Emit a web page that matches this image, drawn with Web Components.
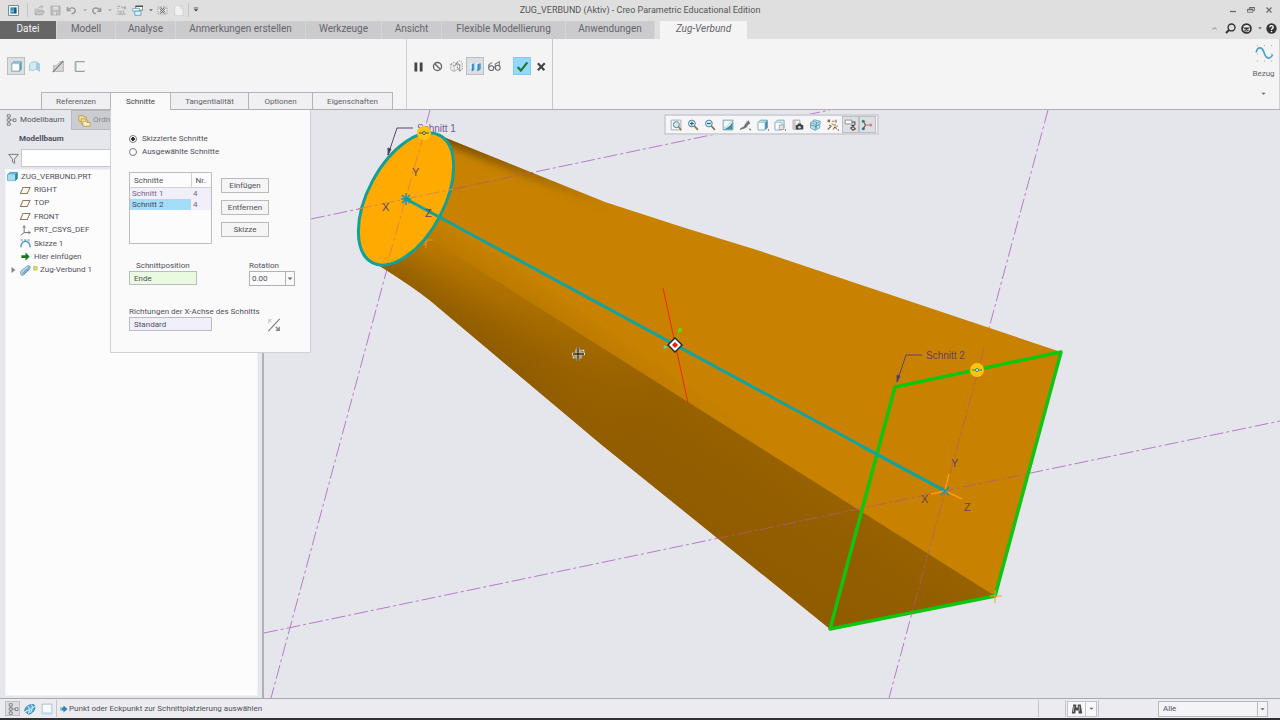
<!DOCTYPE html>
<html lang="de">
<head>
<meta charset="utf-8">
<title>ZUG_VERBUND (Aktiv) - Creo Parametric Educational Edition</title>
<style>
  html, body { margin: 0; height: 100%; }
  body {
    font-family: Roboto, "Open Sans", sans-serif;
    font-size: 8px;
    line-height: 12px;
    color: #50505a;
    --line: #b4b4b8;
    --paper: #f4f4f4;
    --canvas: #e5e6ec;
  }
</style>
</head>
<body>
<cad-app></cad-app>

<script>
const BASE = `*{box-sizing:border-box} button,input,select{font:inherit;color:inherit;margin:0;border-radius:0}`;

function component(name, css, html, setup) {
  const template = document.createElement('template');
  template.innerHTML = `<style>${BASE}${css}</style>${html}`;
  customElements.define(name, class extends HTMLElement {
    constructor() {
      super();
      this.attachShadow({ mode: 'open' }).append(template.content.cloneNode(true));
    }
    connectedCallback() { if (setup) setup(this, this.shadowRoot); }
  });
}

/* ---- Icons, each on a 16 x 16 grid ---- */
const ICONS = {
  app: `<rect x="1" y="1" width="14" height="14" fill="#f6fafc" stroke="#555"/><rect x="3.500" y="3.500" width="9" height="9" fill="#2a8fc0"/><path d="M4 9h5V4" fill="none" stroke="#cfe8f4"/><rect x="9" y="4" width="3" height="8" fill="#24506e"/>`,
  open: `<path d="M1.500 14V6h4l1 1.500h6V14z" fill="#d2d2d2" stroke="#a8a8a8"/><path d="M7 5c1-3 3-3 5-3M10 1l3 1-2 3M2 14l2.500-5H15l-2.500 5z" fill="#c8c8c8" stroke="#a4a4a4"/>`,
  save: `<path d="M1.500 1.500h13v13h-13z" fill="#bcbcbc" stroke="#a0a0a0"/><path d="M4 2h8v5H4zM5 10h7v4H5z" fill="#dedede"/><path d="M9 11h2v3H9z" fill="#a0a0a0"/>`,
  undo: `<path d="M2 3v5h5M2.500 7.500C5 3 14 3 13.500 8.500 13 12 10 12.500 8 12.500" fill="none" stroke="#999" stroke-width="2"/>`,
  redo: `<path d="M14 4v5H9M13.500 8.500C11 3 2 3 2.500 8.500 3 12 6 12.500 7 12.500" fill="none" stroke="#999" stroke-width="2"/>`,
  regen: `<path d="M2 2h4M2 5h2M2 9h3M1 13h13M8 2l2 3M13 1v6M10 4h5M7 8v5M11 8v4" stroke="#aaa" stroke-width="1.600" fill="none"/><path d="M5 10h6v4H5z" fill="none" stroke="#bbb"/>`,
  windows: `<path d="M5.500 1.500h10v6h-10z" fill="#fff" stroke="#555"/><path d="M5 1h11v2H5z" fill="#555"/><path d="M1 5h10v4H1z" fill="#e8f5fa" stroke="#4ba2c0"/><path d="M4 9h9v6H4z" fill="#dff2f8" stroke="#3a8fb0"/>`,
  closewin: `<path d="M1.500 3h13v10h-13z" fill="#ededed" stroke="#777" stroke-dasharray="2 1.500"/><path d="M4.500 4.500l7 7M11.500 4.500l-7 7" stroke="#666" stroke-width="3"/><path d="M4.500 4.500l7 7M11.500 4.500l-7 7" stroke="#f4f4f4" stroke-width="1.200"/>`,
  blank: `<path d="M2.500 .500h8l4 4v11h-12z" fill="#f1f1f1" stroke="#cacaca"/><path d="M10.500 .500v4h4" fill="none" stroke="#cacaca"/>`,
  caret: `<path d="M3 6h10l-5 5z" fill="#666"/>`,
  caretlight: `<path d="M3 6h10l-5 5z" fill="#a6a6a6"/>`,
  morecaret: `<path d="M2 2.500h12" stroke="#444" stroke-width="2"/><path d="M2 6h12l-6 6z" fill="#444"/>`,
  minimize: `<path d="M2 11h12" stroke="#666" stroke-width="2.500"/>`,
  restore: `<path d="M5 6V3h10v6h-3M1 6.500h11v6H1z" fill="none" stroke="#666" stroke-width="1.600"/><path d="M1 7h11M5 3h10" stroke="#666" stroke-width="2.500"/>`,
  close: `<path d="M3 3l10 10M13 3L3 13" stroke="#666" stroke-width="2.200"/>`,
  chevup: `<path d="M3 10l5-4 5 4" fill="none" stroke="#999" stroke-width="2.500"/>`,
  search: `<circle cx="9.500" cy="6.500" r="5" fill="none" stroke="#333" stroke-width="2"/><path d="M6 10l-4.500 4.500" stroke="#333" stroke-width="3"/>`,
  learn: `<circle cx="8" cy="8" r="6.500" fill="#eee" stroke="#333" stroke-width="2.500"/><path d="M2 6.500h12L8 10z" fill="#333"/><path d="M5 10c2 2 4 2 6 0" fill="none" stroke="#333" stroke-width="1.500"/>`,
  help: `<circle cx="8" cy="8" r="7.500" fill="#333"/><path d="M5.500 6C5.500 3 10.500 3 10.500 6 10.500 8 8 8 8 10" fill="none" stroke="#fff" stroke-width="2"/><circle cx="8" cy="12.300" r="1.200" fill="#fff"/>`,
  solid: `<path d="M2 4l2-2h10v9l-2 3H2z" fill="#8fc3da" stroke="#7aabc0"/><path d="M2.500 4.500h9v9h-9z" fill="#fdfeff" stroke="#9cc3d4"/><path d="M12 4.500l2-2v9l-2 2z" fill="#5d9cb8"/>`,
  surface: `<path d="M2 13V6c1-5 10-5 12-1v9c-2-3-5-3-8-1-1-1-3-1-4 0z" fill="#d2ebf4" stroke="#98bfcd"/><path d="M10 3c3 0 4 1 4 3v8c-1-2-2-2-4-2z" fill="#9fcddf"/>`,
  removeMat: `<path d="M2 14V7h3l5-5h4v12z" fill="#d6d6d6" stroke="#aaa"/><path d="M1 15L14 1" stroke="#777" stroke-width="1.300"/>`,
  thin: `<path d="M14.500 2H3.500v12h11" fill="none" stroke="#9a9ea4" stroke-width="1.300"/><path d="M2.500 2v12" stroke="#7ab0c8"/>`,
  pause: `<path d="M3 3h3.500v11H3zM9.500 3H13v11H9.500z" fill="#454545"/>`,
  none: `<circle cx="8" cy="8" r="5" fill="none" stroke="#666" stroke-width="1.700"/><path d="M4.500 4.500l7 7" stroke="#666" stroke-width="1.700"/>`,
  unattached: `<path d="M1 5l4-2 4 2v7l-4 2-4-2zM1 5l4 2 4-2M5 7v7M8 3l4-2 3 2v9l-4 2" fill="none" stroke="#888" stroke-dasharray="2 1"/><path d="M6 7l3-4 3 4M9 9l3 4M12 5v9" stroke="#777" fill="none"/>`,
  attached: `<path d="M3.500 5l3-1v8l-3 2zM10.500 5l4-1v7l-4 3z" fill="#3ba0d4"/><path d="M1 4l3-1v8l-3-1zM8 4l3-1v8l-3-1z" fill="#e4f2f8"/><path d="M4 13.500V5M11 13.500V5" fill="none" stroke="#2476a4"/>`,
  glasses: `<path d="M1 10V6l4-3M9 9V5l5-3v6M7 9h2" stroke="#777" fill="none" stroke-width="1.300"/><ellipse cx="4" cy="10" rx="3" ry="3" fill="#eee" stroke="#666" stroke-width="1.300"/><ellipse cx="12" cy="9.500" rx="3" ry="3" fill="#eee" stroke="#666" stroke-width="1.300"/>`,
  check: `<path d="M2 8.500l4 4.500 8-10" fill="none" stroke="#1f7a35" stroke-width="2.700"/>`,
  cross: `<path d="M3.500 4l8 8.500M12 4l-8.500 8.500" stroke="#444" stroke-width="2.600"/>`,
  datum: `<path d="M2 1v.800M8 1v.800M14 1v.800M2 8v.800M8 8v.800M14 8v.800M2 14v.800M8 14v.800M14 14v.800" stroke="#999" stroke-width=".8"/><path d="M1 7C2 2 6 2 7.500 7S12 14 15 9" fill="none" stroke="#4aa3cc" stroke-width="1.400"/>`,
  tree: `<path d="M3 1h4v3H3zM3 6.500h4v3H3zM3 12h4v3H3zM11 6.500h3.500v3.500H11z" fill="#fff" stroke="#777" stroke-width="1.300"/><path d="M5 4v3M5 9.500V12M7 8h4" stroke="#777"/>`,
  folders: `<path d="M1 2h5l1 1.500h3V9H1z" fill="#f3df9c" stroke="#b5964a"/><path d="M4 6h4l1 1.500h3V12H4z" fill="#f7e5a8" stroke="#b5964a"/><path d="M6 9h4l1 1.500h4V15H6z" fill="#fcefc0" stroke="#b5964a"/>`,
  filter: `<path d="M1 2h14L9.500 9v6l-3-2V9z" fill="#e8e8ea" stroke="#77777d" stroke-width="1.400"/>`,
  part: `<path d="M1 5l3-3h11v9l-3 3H1z" fill="#63b9dd" stroke="#4287a5"/><path d="M1.500 5H12v9H1.500z" fill="#a6dcf0"/><path d="M12 5l3-3v9l-3 3z" fill="#2d7ea5"/>`,
  plane: `<path d="M4.500 3.500h10l-4 9h-10z" fill="#fffdf4" stroke="#8f785c" stroke-width="1.500"/>`,
  csys: `<path d="M6 1v10l9 0M6 11l-5 4" fill="none" stroke="#6c6259" stroke-width="1.300"/><path d="M4 4l2-3 2 3M12 9l3 2-3 2" fill="none" stroke="#6c6259"/>`,
  sketch: `<path d="M1 13C3 2 13 2 15 13" fill="none" stroke="#459dc4" stroke-width="2"/><path d="M1 3h3M6 3h3M11 3h3M1 13h1M14 13h1" stroke="#777" stroke-width="1.500"/>`,
  insert: `<path d="M2 6h6V2l6 6-6 6v-4H2z" fill="#167a1c"/>`,
  sweep: `<path d="M1 13C0 9 3 7 6 5s4-4 7-4c3 1 2 5-1 7s-5 6-8 7c-2 0-2 0-3-2z" fill="#b4daec" stroke="#4384a8"/><path d="M3 13c3-1 3-5 6-6s4-3 4-5M6 13c2-4 5-4 7-7" fill="none" stroke="#2f6f94"/>`,
  expander: `<path d="M5 2l8 6-8 6z" fill="#888"/>`,
  yellow: `<path d="M2 2h11v11H2z" fill="#e4e36c" stroke="#a9a648" stroke-width="2"/>`,
  flip: `<path d="M1.500 15L14.500 1" stroke="#777" stroke-width="1.200"/><path d="M2 6V2h4M2 2l3 3" stroke="#bbb" fill="none"/><path d="M10 14h4v-4M14 14l-4-4" stroke="#888" fill="none" stroke-width="1.500"/>`,
  zoomfit: `<path d="M1.500 1.500h13v13h-13z" fill="#f4fafc" stroke="#8a979c"/><circle cx="8.500" cy="7.500" r="4" fill="#cfeaf5" stroke="#64808c" stroke-width="1.300"/><path d="M11.500 10.500L15 15" stroke="#8a7350" stroke-width="2"/>`,
  zoomin: `<circle cx="6.500" cy="6" r="4.500" fill="#d2eef8" stroke="#527c90" stroke-width="1.300"/><path d="M4 6h5M6.500 3.500v5" stroke="#176283" stroke-width="1.500"/><path d="M10 9.500l4.500 5" stroke="#8a7350" stroke-width="2.200"/>`,
  zoomout: `<circle cx="6.500" cy="6" r="4.500" fill="#d2eef8" stroke="#527c90" stroke-width="1.300"/><path d="M4 6h5" stroke="#176283" stroke-width="1.500"/><path d="M10 9.500l4.500 5" stroke="#8a7350" stroke-width="2.200"/>`,
  repaint: `<path d="M1.500 1.500h13v13h-13z" fill="#eef9fc" stroke="#69848f"/><path d="M14 3v11H2C8 12 12 8 14 3z" fill="#3c90a8"/><path d="M2 12C7 11 9 7 13 2" fill="none" stroke="#bbb"/>`,
  style: `<path d="M1 15c1-5 4-3 6-6s2-6 6-7l2 4c-3 1-3 3-5 5s-5 2-9 4z" fill="#6f7375"/><path d="M7 8l5-5" stroke="#ccc"/><path d="M13 13h2.500v2.500z" fill="#333"/>`,
  views: `<path d="M1.500 4.500l3-3h9v10l-3 3h-9z" fill="#b4dfed" stroke="#5195ad"/><path d="M1.500 4.500h9v10h-9z" fill="#fdfefe" stroke="#8bb9c9"/><path d="M11 4.500l3-3v10l-3 3z" fill="#448ea8"/><path d="M14 14h2v2z" fill="#333"/>`,
  display: `<path d="M1.500 4.500l3-3h9v10l-3 3h-9z" fill="#d7edf4" stroke="#6b9caf"/><path d="M1.500 4.500h9v10h-9z" fill="#fdfefe" stroke="#8bb9c9"/><path d="M7 8h6v6H7z" fill="#e5e5e5" stroke="#999"/><path d="M14 14h2v2z" fill="#333"/>`,
  camera: `<path d="M1.500 1.500h9v12h-9z" fill="#f5f5f5" stroke="#888"/><path d="M2 2h3v11H2z" fill="#c9c9c9"/><path d="M5 8h2l1-2h4l1 2h2v6H5z" fill="#444"/><circle cx="10" cy="11" r="1.700" fill="#ddd"/>`,
  section: `<path d="M2 5l5-4 8 2-1 9-6 3-6-3z" fill="#bfe0ec" stroke="#5c9bb2"/><path d="M2 5l7 2 6-4M9 7l-1 8M5 3l5 1v9" fill="none" stroke="#5c9bb2"/><path d="M2 8l7 2 5-3" stroke="#3f819b" fill="none"/>`,
  datums: `<path d="M1 1l3 3M4 1L1 4M7 3h3M12 1v4M3 8l3 2M9 8h3M13 9l1 1M1 14l4-4M8 14l3-4M13 13l-2-2" stroke="#8b6840" stroke-width="1.500"/><path d="M6 6l3 2" stroke="#cba24a" stroke-width="2"/><path d="M14 14h2v2z" fill="#333"/>`,
  annot: `<path d="M1.500 1.500h9v5h-9z" fill="#fff" stroke="#777"/><path d="M10.500 4h4v4M10 8.500h4M9 12l3-2 3 3-3 2z" fill="none" stroke="#444" stroke-width="1.400"/>`,
  spin: `<path d="M3 3l3 5-3 5" fill="none" stroke="#4b5c58" stroke-width="1.500"/><path d="M6 8h7" stroke="#c98383" stroke-width="1.500"/><circle cx="3" cy="3" r="2" fill="#2b8a6a"/><circle cx="3" cy="13" r="2" fill="#3d6d91"/><circle cx="13" cy="8" r="2" fill="#d67f86"/>`,
  globe: `<path d="M1 11C1 5 6 2 12 2l2 1c2 5-2 11-8 12z" fill="#4aa7d6" stroke="#2b7198"/><path d="M1 12C5 9 10 9 15 4M5 4c3 3 3 6 1 10M10 2c2 3 1 8-2 11" fill="none" stroke="#dceff8" stroke-width="1.400"/>`,
  pane: `<path d="M1.500 1.500h13v13h-13z" fill="#f5fbfd" stroke="#9bb0ba"/><path d="M2 12h12v2.500H2z" fill="#c2e3f0"/>`,
  arrow: `<path d="M1 5h6V1l8 7-8 7v-4H1z" fill="#2d84b5"/><path d="M1 6h3v4H1z" fill="#8cc4df"/>`,
  binoculars: `<path d="M3 2h4v4h2V2h4l2 12h-5v-4H6v4H1z" fill="#4a4a4a"/><path d="M4 4l-1 8M11 4v7" stroke="#aaa" stroke-width="1.300"/>`
};

component('cad-icon', `
  :host{display:inline-block;width:12px;height:12px;flex:none}
  svg{display:block;width:100%;height:100%}
`, `<svg viewBox="0 0 16 16" aria-hidden="true"></svg>`,
  (host, root) => { root.querySelector('svg').innerHTML = ICONS[host.getAttribute('name')] || ''; });

component('tool-button', `
  :host{display:block;flex:none;width:var(--w,18px);height:var(--h,18px)}
  button{display:grid;place-items:center;width:100%;height:100%;padding:0;border:1px solid transparent;background:none}
  :host([pressed]) button{background:#dcdee2;border-color:#bcbec2}
  :host([accept]) button{background:#93d9fb;border-color:#84c8ea}
  cad-icon{width:var(--i,12px);height:var(--i,12px)}
`, `<button type="button"><cad-icon></cad-icon></button>`,
  (host, root) => {
    const icon = document.createElement('cad-icon');
    icon.setAttribute('name', host.getAttribute('icon'));
    root.querySelector('cad-icon').replaceWith(icon);
    root.querySelector('button').setAttribute('aria-label', host.getAttribute('label') || host.getAttribute('icon'));
  });

component('title-bar', `
  :host{display:grid;grid-template-columns:1fr auto 1fr;align-items:center;height:20px;background:#dfdfdf}
  .quick{display:flex;align-items:center;gap:3px;padding-left:7px}
  .quick tool-button{--w:13px;--h:14px;--i:11px}
  .quick .c{--w:6px;--i:6px}
  .sep{width:1px;height:14px;background:#c4c4c4}
  .sep.first{margin:0 2px 0 4px}
  h1{margin:0;font-size:9px;font-weight:400;line-height:12px;color:#555}
  .win{display:flex;justify-content:flex-end;gap:4px;padding-right:4px}
  .win tool-button{--w:14px;--h:14px;--i:8px}
`, `
  <div class="quick">
    <tool-button icon="app" label="Creo"></tool-button><span class="sep first"></span>
    <tool-button icon="open" label="Öffnen"></tool-button>
    <tool-button icon="save" label="Speichern"></tool-button>
    <tool-button icon="undo" label="Rückgängig"></tool-button><tool-button class="c" icon="caretlight"></tool-button>
    <tool-button icon="redo" label="Wiederholen"></tool-button><tool-button class="c" icon="caretlight"></tool-button>
    <tool-button icon="regen" label="Regenerieren"></tool-button>
    <tool-button icon="windows" label="Fenster"></tool-button><tool-button class="c" icon="caret"></tool-button>
    <tool-button icon="closewin" label="Fenster schließen"></tool-button>
    <tool-button icon="blank" label="Neu"></tool-button><span class="sep"></span>
    <tool-button class="c" icon="morecaret"></tool-button>
  </div>
  <h1>ZUG_VERBUND (Aktiv) - Creo Parametric Educational Edition</h1>
  <div class="win">
    <tool-button icon="minimize" label="Minimieren"></tool-button>
    <tool-button icon="restore" label="Wiederherstellen"></tool-button>
    <tool-button icon="close" label="Schließen"></tool-button>
  </div>`);

component('menu-tabs', `
  :host{display:flex;justify-content:space-between;background:#dfdfdf;height:19px;padding-top:1px}
  nav{display:grid;grid-template-columns:57px 59px 60px 130px 76px 60px 124px 89px 5px 87px}
  a{display:grid;place-items:center;height:18px;padding-bottom:2px;font-size:10px;line-height:14px;color:#65656a;text-decoration:none;background:#cbcbcd;border-right:1px solid #d6d6d8;white-space:nowrap}
  a.file{background:#666;color:#f4f4f4}
  a.on{background:var(--paper);font-style:italic;border:0}
  .right{display:flex;align-items:center;gap:3px;padding:0 2px 4px 0}
  .right tool-button{--w:13px;--h:13px;--i:11px}
  .right .c{--w:6px;--i:6px}
  .right .up{--i:7px}
`, `
  <nav>
    <a class="file" href="#datei">Datei</a><a href="#modell">Modell</a><a href="#analyse">Analyse</a>
    <a href="#anmerkungen">Anmerkungen erstellen</a><a href="#werkzeuge">Werkzeuge</a><a href="#ansicht">Ansicht</a>
    <a href="#flex">Flexible Modellierung</a><a href="#anwendungen">Anwendungen</a><span></span>
    <a class="on" href="#zug">Zug-Verbund</a>
  </nav>
  <div class="right">
    <tool-button class="up" icon="chevup" label="Minimieren"></tool-button>
    <tool-button icon="search" label="Suchen"></tool-button>
    <tool-button icon="learn" label="Lernen"></tool-button><tool-button class="c" icon="caret"></tool-button>
    <tool-button icon="help" label="Hilfe"></tool-button>
  </div>`);

component('ribbon-bar', `
  :host{display:grid;grid-template-columns:407px 146px 1fr 32px;height:71px;background:var(--paper);border-bottom:1px solid #b0b0b4}
  section{display:flex;flex-direction:column;justify-content:space-between;border-right:1px solid #d0d0d2}
  section:nth-child(3){border-right-color:#c4c8cc}
  section:nth-child(4){border:0}
  .row{display:flex;padding:18px 0 0 7px}
  .row.mid{gap:1px;padding-left:2px}
  .row tool-button{--i:13px}
  .gap6{margin-left:6px}.gap3{margin-left:3px}.gap9{margin-left:9px}
  .tabs{display:grid;grid-template-columns:70px 60px 78px 64px 80px;padding-left:41px}
  .tabs a{height:17px;display:grid;place-items:center;padding-top:1px;border:1px solid #b4b4ba;border-width:1px 1px 0 0;background:#f0f0f2;color:#606066;text-decoration:none}
  .tabs a:first-child{border-left-width:1px}
  .tabs a.on{background:#fafafa;color:#444;margin-bottom:-1px;padding-top:0;height:18px}
  .bezug{align-items:center;justify-content:flex-start;padding-top:4px}
  .bezug tool-button{--w:20px;--h:20px;--i:19px}
  .bezug span{margin:5px 0 8px;color:#66666a}
  .bezug .c{--w:10px;--h:10px;--i:7px}
`, `
  <section>
    <div class="row">
      <tool-button pressed icon="solid" label="Volumenkörper"></tool-button>
      <tool-button icon="surface" label="Fläche"></tool-button>
      <tool-button class="gap6" icon="removeMat" label="Material entfernen"></tool-button>
      <tool-button class="gap3" icon="thin" label="Dünn"></tool-button>
    </div>
    <nav class="tabs"><a href="#ref">Referenzen</a><a class="on" href="#schnitte">Schnitte</a><a href="#tan">Tangentialität</a><a href="#opt">Optionen</a><a href="#eig">Eigenschaften</a></nav>
  </section>
  <section>
    <div class="row mid">
      <tool-button icon="pause" label="Pause"></tool-button>
      <tool-button icon="none" label="Keine Vorschau"></tool-button>
      <tool-button icon="unattached" label="Nicht angehängt"></tool-button>
      <tool-button pressed icon="attached" label="Angehängt"></tool-button>
      <tool-button icon="glasses" label="Verifiziert"></tool-button>
      <tool-button accept class="gap9" icon="check" label="OK"></tool-button>
      <tool-button icon="cross" label="Abbrechen"></tool-button>
    </div>
  </section>
  <section></section>
  <section class="bezug">
    <tool-button icon="datum" label="Bezug"></tool-button><span>Bezug</span><tool-button class="c" icon="caret" label="Mehr"></tool-button>
  </section>`);

component('model-tree', `
  :host{display:flex;flex-direction:column;width:264px;flex:none;background:#e6e7ec;border-right:2px solid #b0b0b8}
  .tabs{display:grid;grid-template-columns:71px 1fr;height:20px}
  .tabs a{display:flex;align-items:center;gap:3px;color:#55555c;text-decoration:none;padding-left:5px}
  .tabs a+a{background:#cbccd0;border:1px solid #b8b8be;padding-left:6px;color:#85858a;gap:2px}
  .tabs a+a cad-icon{width:13px;height:13px}
  h2{font-size:8px;line-height:12px;margin:3px 0 4px 19px}
  .filter{display:grid;grid-template-columns:21px 1fr;align-items:center;height:18px;padding-right:4px}
  .filter cad-icon{margin-left:8px;width:11px;height:11px}
  input{height:18px;width:100%;border:1px solid #c6c6ce;background:#fff;outline:0}
  .tree{flex:1;margin:2px 4px 2px 5px;background:#fcfcfd;border:1px solid #f2f2f6}
  ul{list-style:none;margin:0;padding:0;display:grid;grid-auto-rows:1fr;height:107px}
  li{display:flex;align-items:center;gap:3px;padding-left:14px;white-space:nowrap}
  li cad-icon{width:11px;height:11px}
  li.root{padding-left:1px}
  li.exp{padding-left:3px;gap:4px}
  li.exp .tiny{width:8px;height:8px;margin-right:-1px}
  li.exp .sq{width:5px;height:5px;margin:0 -2px 3px -2px}
`, `
  <nav class="tabs"><a href="#baum"><cad-icon name="tree"></cad-icon>Modellbaum</a><a href="#ordner"><cad-icon name="folders"></cad-icon>Ordner-Browser</a></nav>
  <h2>Modellbaum</h2>
  <div class="filter"><cad-icon name="filter"></cad-icon><input type="text" aria-label="Filter"></div>
  <div class="tree"><ul>
    <li class="root"><cad-icon name="part"></cad-icon>ZUG_VERBUND.PRT</li>
    <li><cad-icon name="plane"></cad-icon>RIGHT</li>
    <li><cad-icon name="plane"></cad-icon>TOP</li>
    <li><cad-icon name="plane"></cad-icon>FRONT</li>
    <li><cad-icon name="csys"></cad-icon>PRT_CSYS_DEF</li>
    <li><cad-icon name="sketch"></cad-icon>Skizze 1</li>
    <li><cad-icon name="insert"></cad-icon>Hier einfügen</li>
    <li class="exp"><cad-icon class="tiny" name="expander"></cad-icon><cad-icon name="sweep"></cad-icon><cad-icon class="sq" name="yellow"></cad-icon>Zug-Verbund 1</li>
  </ul></div>`);

component('sections-panel', `
  :host{display:block;width:201px;height:243px;padding:22px 15px 0 18px;background:#fafafa;border:1px solid #d0d0d6;border-top:0}
  .radio{display:flex;align-items:center;gap:5px;height:13px}
  input[type=radio]{appearance:none;width:8px;height:8px;border:1px solid #777;border-radius:50%;background:#fff}
  input[type=radio]:checked{background:radial-gradient(circle,#333 0 2px,#fff 2px)}
  .pick{display:grid;grid-template-columns:83px 48px;gap:9px;padding-top:14px}
  .list{height:72px;border:1px solid #bcbcc2;background:#fcfcfc}
  table{width:100%;border-collapse:collapse;table-layout:fixed}
  th{height:14px;padding:2px 0 0 4px;font-weight:400;line-height:11px;text-align:left;border-bottom:1px solid #d0d0d4}
  th+th,td+td{width:20px}
  th+th{border-left:1px solid #d0d0d4}
  td{height:11px;padding:0 0 0 2px;line-height:11px;background:#f2effa;color:#74658a}
  tr.sel td:first-child{background:#a5dcf8;color:#3d4c60}
  .buttons{display:flex;flex-direction:column;gap:7px;padding-top:6px}
  .buttons button{height:15px;padding:0;border:1px solid #bababe;background:#f5f5f6}
  .two{display:flex;justify-content:space-between;padding-top:16px}
  .two label{display:block;line-height:12px;height:11px}
  .two .pos label{padding-left:7px}
  input[type=text]{display:block;height:14px;border:1px solid #b9bcc2;padding:0 4px;outline:0}
  #pos{width:68px;background:#e9fae0}
  #dir{width:83px;background:#f1effa}
  .combo{position:relative;width:46px}
  select{appearance:none;display:block;width:100%;height:15px;border:1px solid #b0b0b6;background:#fafafa;padding:0 2px;line-height:12px;outline:0}
  .combo cad-icon{position:absolute;right:1px;top:1px;width:9px;height:13px;border-left:1px solid #b0b0b6;pointer-events:none}
  .dir{display:grid;grid-template-columns:1fr auto;padding-top:20px}
  .dir label{grid-column:1/3;height:11px;line-height:12px;white-space:nowrap}
  .dir tool-button{--i:14px;--w:18px;--h:15px;margin-right:12px}
`, `
  <div class="radio"><input type="radio" name="kind" id="r1" checked><label for="r1">Skizzierte Schnitte</label></div>
  <div class="radio"><input type="radio" name="kind" id="r2"><label for="r2">Ausgewählte Schnitte</label></div>
  <div class="pick">
    <div class="list"><table>
      <thead><tr><th>Schnitte</th><th>Nr.</th></tr></thead>
      <tbody><tr><td>Schnitt 1</td><td>4</td></tr><tr class="sel"><td>Schnitt 2</td><td>4</td></tr></tbody>
    </table></div>
    <div class="buttons"><button type="button">Einfügen</button><button type="button">Entfernen</button><button type="button">Skizze</button></div>
  </div>
  <div class="two">
    <div class="pos"><label for="pos">Schnittposition</label><input type="text" id="pos" value="Ende"></div>
    <div><label for="rot">Rotation</label><div class="combo"><select id="rot"><option>0.00</option></select><cad-icon name="caret"></cad-icon></div></div>
  </div>
  <div class="dir"><label for="dir">Richtungen der X-Achse des Schnitts</label><input type="text" id="dir" value="Standard"><tool-button icon="flip" label="Umkehren"></tool-button></div>`);

component('view-toolbar', `
  :host{display:flex;justify-content:space-between;align-items:center;width:215px;height:21px;padding:0 1px;background:#f6f6f8;border:2px solid #d2d2d8}
  tool-button{--w:17px;--h:17px;--i:12px}
`, `<tool-button icon="zoomfit"></tool-button><tool-button icon="zoomin"></tool-button><tool-button icon="zoomout"></tool-button><tool-button icon="repaint"></tool-button><tool-button icon="style"></tool-button><tool-button icon="views"></tool-button><tool-button icon="display"></tool-button><tool-button icon="camera"></tool-button><tool-button icon="section"></tool-button><tool-button icon="datums"></tool-button><tool-button pressed icon="annot"></tool-button><tool-button pressed icon="spin"></tool-button>`);

/* The scene's user units are window pixels of the reference model view. */
component('model-view', `
  :host{display:block;position:relative;flex:1;min-width:0;overflow:hidden;background:var(--canvas)}
  svg{position:absolute;inset:0;width:100%;height:100%}
  text{font-family:"Liberation Sans",sans-serif;font-size:11px;fill:#664060}
  text.name{font-size:10px}
  text.pale{fill:#75579a}
  view-toolbar{position:absolute;left:400px;top:4px}
`, `
  <svg viewBox="264 110 1016 588" preserveAspectRatio="xMidYMid slice" role="img" aria-label="3D-Modell">
    <defs>
      <linearGradient id="soft" gradientUnits="userSpaceOnUse" x1="540" y1="275" x2="482" y2="366">
        <stop offset="0" stop-color="#c88300"/><stop offset=".35" stop-color="#b87700"/><stop offset=".65" stop-color="#9a6400"/><stop offset="1" stop-color="#835400"/>
      </linearGradient>
      <linearGradient id="dark" gradientUnits="userSpaceOnUse" x1="760" y1="440" x2="700" y2="534">
        <stop offset="0" stop-color="#986200"/><stop offset=".4" stop-color="#935e00"/><stop offset="1" stop-color="#905c00"/>
      </linearGradient>
      <linearGradient id="fade" gradientUnits="userSpaceOnUse" x1="430" y1="230" x2="660" y2="390">
        <stop offset="0" stop-color="#000"/><stop offset="1" stop-color="#fff"/>
      </linearGradient>
      <linearGradient id="fadeout" gradientUnits="userSpaceOnUse" x1="560" y1="320" x2="760" y2="455">
        <stop offset="0" stop-color="#fff"/><stop offset="1" stop-color="#000"/>
      </linearGradient>
      <linearGradient id="rim" gradientUnits="userSpaceOnUse" x1="440" y1="138" x2="610" y2="204">
        <stop offset="0" stop-color="#6e4800"/><stop offset="1" stop-color="#6e4800" stop-opacity="0"/>
      </linearGradient>
      <mask id="m" maskUnits="userSpaceOnUse" x="264" y="110" width="1016" height="588"><rect x="264" y="110" width="1016" height="588" fill="url(#fade)"/></mask>
      <mask id="n" maskUnits="userSpaceOnUse" x="264" y="110" width="1016" height="588"><rect x="264" y="110" width="1016" height="588" fill="url(#fadeout)"/></mask>
      <filter id="blur" x="-10%" y="-30%" width="120%" height="160%"><feGaussianBlur stdDeviation="4"/></filter>
      <clipPath id="bodyclip"><path d="M441 136Q540 176 605 202Q680 227 757 250L1061 352L995 596L830 629L602 445L439 308Q420 291 378 265Z"/></clipPath>
    </defs>
    <g fill="none" stroke="#b87acb" stroke-dasharray="14 3 3 3">
      <path d="M430 110L271 698M1048 110L889 698M311 219L830 110M264 633L1280 421"/>
    </g>
    <g clip-path="url(#bodyclip)">
      <path d="M350 120H1070V640H350z" fill="#c88200"/>
      <path d="M995 596L430 208L360 265L700 620H995z" fill="url(#soft)" mask="url(#n)"/>
      <path d="M995 596L430 239L360 265L830 640z" fill="url(#dark)" mask="url(#m)"/>
      <path d="M437 134Q540 176 610 204" fill="none" stroke="url(#rim)" stroke-width="12" filter="url(#blur)"/>
      <path d="M454 189L590 160M984 349L910 620M715 539L1040 471" fill="none" stroke="#b05c78" stroke-dasharray="14 3 3 3" opacity=".75"/>
    </g>
    <ellipse cx="406" cy="199" rx="38" ry="72" transform="rotate(28 406 199)" fill="#ffaa00" stroke="#12a098" stroke-width="3"/>
    <path d="M424 133L387 265M358 209L453 189" stroke="#d98a48" stroke-dasharray="14 3 3 3"/>
    <path d="M406 199L945 491" stroke="#12a3a0" stroke-width="3"/>
    <path d="M402 195l8 8M410 195l-8 8M406 193v12M401 199h10" stroke="#1596b4" stroke-width="1.500"/>
    <path d="M427 208l3 6 6 1z" fill="#12a098"/>
    <path d="M424 245l3-5h6M426 241v7" fill="none" stroke="#dc9635"/>
    <path d="M895 387L1061 352L995 596L830 629Z" fill="none" stroke="#10c410" stroke-width="3.500" stroke-linejoin="round"/>
    <path d="M861 446L945 491" stroke="#12a3a0" stroke-width="3"/>
    <path d="M945 491l4-17M945 491l-14 3M945 491l17 8" stroke="#ff9d00" stroke-width="1.500"/>
    <path d="M941 487l8 8M949 487l-8 8" stroke="#1596b4" stroke-width="1.500"/>
    <path d="M990 596h12M995 590v13" stroke="#f0a030"/>
    <g fill="none" stroke="#5a4570"><path d="M388 155L397 128H413M897 382L906 355H922"/><path d="M388 148l3 1-3 6zM897 375l3 1-3 6z" fill="#4a3560"/></g>
    <text class="name pale" x="417" y="132">Schnitt 1</text><text class="name" x="926" y="359">Schnitt 2</text>
    <text x="412" y="176">Y</text><text x="382" y="211">X</text><text x="425" y="217">Z</text>
    <text x="951" y="467">Y</text><text x="921" y="503">X</text><text x="964" y="511">Z</text>
    <g><circle cx="424" cy="133" r="7" fill="#ffc40c"/><path d="M419 133h10" stroke="#555"/><circle cx="424" cy="133" r="1.500" fill="#ffd84a" stroke="#555"/></g>
    <g><circle cx="977" cy="370" r="7" fill="#ffc40c"/><path d="M972 370h10" stroke="#3b7c70"/><circle cx="977" cy="370" r="1.500" fill="#fff" stroke="#3b7c70"/></g>
    <path d="M663 288L688 403" stroke="#f02810"/>
    <path d="M675 345l4-15M675 345l-10 3" stroke="#62cc20"/><circle cx="680" cy="330" r="2" fill="#5ce010"/><circle cx="665" cy="347" r="1.500" fill="#5fd8a0"/>
    <path d="M675 338l7 7-7 7-7-7z" fill="#fff" stroke="#222" stroke-width="1.400"/><path d="M675 342l3 3-3 3-3-3z" fill="#f01818"/>
    <g fill="none"><path d="M578 347v14M575 351h8v3M582 357h-8v-3M572 354h13" stroke="#e8e0d0" stroke-width="2.500"/><path d="M578 347v14M573 354h11" stroke="#2c2418" stroke-width="1.300"/><path d="M575 351h8v3M582 357h-8v-3" stroke="#5c4a30" stroke-width=".8"/></g>
  </svg>
  <view-toolbar></view-toolbar>`);

component('status-bar', `
  :host{display:flex;align-items:center;height:22px;background:#ececf0;border-top:1px solid #a8a8b0;border-bottom:2px solid #303034;padding:0 12px 0 5px}
  tool-button{--w:15px;--h:15px;--i:12px;margin-right:2px}
  .sep{width:1px;height:17px;background:#c4c4ca}
  .msg{flex:1;display:flex;align-items:center;gap:1px;padding-left:3px}
  .msg cad-icon{width:8px;height:8px}
  .find{display:flex;width:30px;height:16px;margin:0 1px;border:1px solid #c4c4ca;background:#f8f8fa}
  .find tool-button{--w:17px;--h:14px;--i:12px;margin:0}
  .find .c{--w:11px;--i:7px;border-left:1px solid #c4c4ca}
  .space{width:26px}
  .combo{position:relative;width:110px;margin-left:59px}
  select{appearance:none;display:block;width:100%;height:16px;border:1px solid #b8b8be;background:#f4f4f6;padding:0 4px;outline:0}
  .combo cad-icon{position:absolute;right:1px;top:1px;width:10px;height:14px;border-left:1px solid #b8b8be;padding:0 1px;box-sizing:border-box;pointer-events:none}
`, `
  <tool-button pressed icon="tree" label="Modellbaum"></tool-button><tool-button icon="globe" label="Browser"></tool-button><tool-button icon="pane" label="Vollbild"></tool-button>
  <span class="sep"></span>
  <div class="msg"><cad-icon name="arrow"></cad-icon><span>Punkt oder Eckpunkt zur Schnittplatzierung auswählen</span></div>
  <span class="sep"></span><span class="space"></span><span class="sep"></span>
  <div class="find"><tool-button icon="binoculars" label="Suchen"></tool-button><tool-button class="c" icon="caret" label="Mehr"></tool-button></div>
  <span class="sep"></span>
  <div class="combo"><select aria-label="Filter"><option>Alle</option></select><cad-icon name="caret"></cad-icon></div>`);

component('cad-app', `
  :host{display:flex;flex-direction:column;height:100vh;overflow:hidden}
  main{flex:1;display:flex;position:relative;min-height:0}
  sections-panel{position:absolute;left:110px;top:0}
`, `<title-bar></title-bar><menu-tabs></menu-tabs><ribbon-bar></ribbon-bar>
  <main><model-tree></model-tree><model-view></model-view><sections-panel></sections-panel></main>
  <status-bar></status-bar>`);
</script>
</body>
</html>
